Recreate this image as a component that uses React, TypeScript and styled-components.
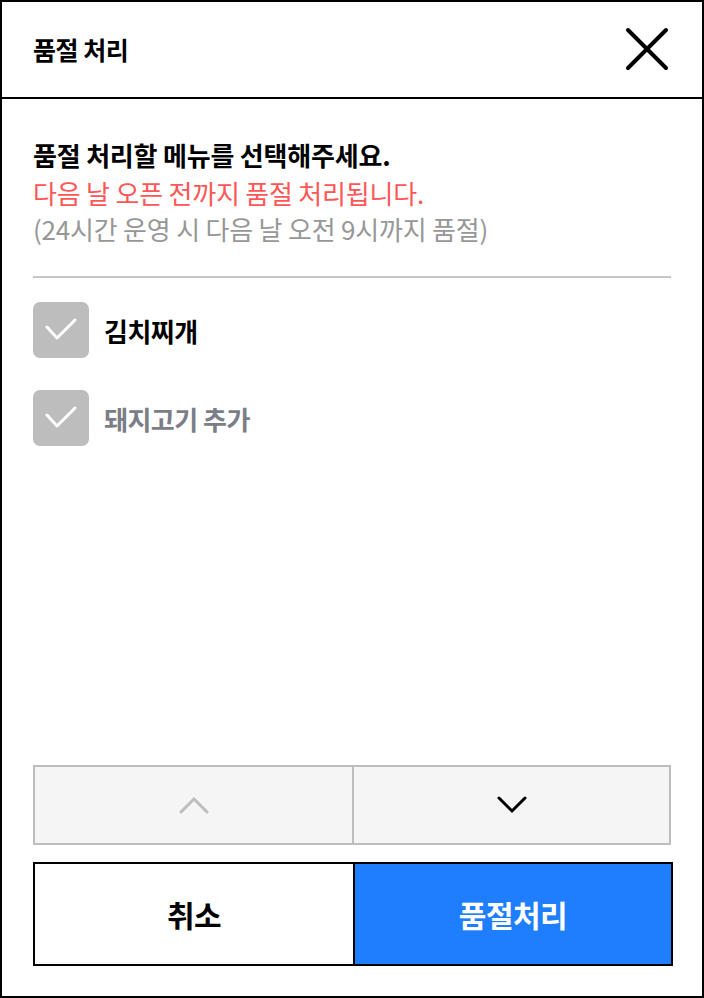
import React, { useState } from "react";
import styled, { createGlobalStyle } from "styled-components";

const GlobalStyle = createGlobalStyle`
  html, body {
    margin: 0;
    padding: 0;
    background: #fff;
  }
  * {
    box-sizing: border-box;
  }
  body {
    font-family: "Noto Sans CJK KR", "Noto Sans", sans-serif;
  }
`;

const Modal = styled.div`
  width: 704px;
  height: 998px;
  border: 2px solid #000;
  display: flex;
  flex-direction: column;
  background: #fff;
`;

const Header = styled.header`
  height: 97px;
  flex-shrink: 0;
  border-bottom: 2px solid #000;
  display: flex;
  align-items: center;
  justify-content: space-between;
  padding: 0 31px 2px 31px;
`;

const Title = styled.h1`
  margin: 0;
  font-size: 25px;
  font-weight: 700;
  letter-spacing: -0.5px;
  color: #000;
`;

const CloseButton = styled.button`
  width: 44px;
  height: 44px;
  margin-right: 2px;
  border: 0;
  padding: 0;
  background: none;
  display: flex;
  align-items: center;
  justify-content: center;
  cursor: pointer;
`;

const Body = styled.main`
  flex: 1;
  display: flex;
  flex-direction: column;
  padding: 37px 31px 30px;
`;

const Notice = styled.div`
  display: flex;
  flex-direction: column;
  padding-bottom: 30px;
  border-bottom: 2px solid #c3c6ce;
`;

const Line = styled.p<{ $tone: "main" | "warn" | "sub" }>`
  margin: 0;
  line-height: ${(p) => (p.$tone === "sub" ? "34px" : "38px")};
  letter-spacing: -0.2px;
  font-size: 26px;
  font-weight: ${(p) => (p.$tone === "main" ? 700 : 400)};
  color: ${(p) =>
    p.$tone === "main" ? "#000" : p.$tone === "warn" ? "#ff5656" : "#979797"};
`;

const MenuList = styled.ul`
  list-style: none;
  margin: 24px 0 0;
  padding: 0;
  display: flex;
  flex-direction: column;
  gap: 32px;
`;

const MenuItem = styled.li`
  display: flex;
  align-items: center;
  gap: 15px;
  cursor: pointer;
`;

const CheckBox = styled.span<{ $checked: boolean }>`
  width: 56px;
  height: 56px;
  border-radius: 7px;
  background: ${(p) => (p.$checked ? "#1e7efe" : "#bdbdbd")};
  display: flex;
  align-items: center;
  justify-content: center;
  flex-shrink: 0;
`;

const MenuLabel = styled.span<{ $option?: boolean }>`
  font-size: 26px;
  font-weight: 700;
  letter-spacing: -0.5px;
  color: ${(p) => (p.$option ? "#7b7e86" : "#000")};
`;

const Spacer = styled.div`
  flex: 1;
`;

const PagerRow = styled.div`
  display: grid;
  grid-template-columns: 1fr 1fr;
  height: 80px;
  border: 2px solid #bdbdbd;
  background: #f5f5f5;
`;

const PagerButton = styled.button<{ $first?: boolean }>`
  border: 0;
  border-left: ${(p) => (p.$first ? "0" : "2px solid #bdbdbd")};
  background: transparent;
  display: flex;
  align-items: center;
  justify-content: center;
  padding: 0;
  cursor: pointer;
`;

const ActionRow = styled.div`
  margin-top: 17px;
  margin-right: -2px;
  display: grid;
  grid-template-columns: 1fr 1fr;
  height: 104px;
  border: 2px solid #000;
`;

const ActionButton = styled.button<{ $primary?: boolean }>`
  border: 0;
  border-left: ${(p) => (p.$primary ? "2px solid #000" : "0")};
  background: ${(p) => (p.$primary ? "#1e7efe" : "#fff")};
  color: ${(p) => (p.$primary ? "#fff" : "#000")};
  font-family: "Noto Sans CJK KR", "Noto Sans", sans-serif;
  font-size: 30px;
  font-weight: 700;
  letter-spacing: -0.5px;
  cursor: pointer;
`;

const CloseIcon = () => (
  <svg width="44" height="44" viewBox="0 0 44 44">
    <path
      d="M3 3 L41 41 M41 3 L3 41"
      stroke="#000"
      strokeWidth="4"
      strokeLinecap="round"
      fill="none"
    />
  </svg>
);

const CheckIcon = () => (
  <svg width="34" height="24" viewBox="0 0 34 24">
    <path
      d="M3 9 L13 20 L31 2"
      stroke="#fff"
      strokeWidth="3"
      strokeLinecap="round"
      strokeLinejoin="round"
      fill="none"
    />
  </svg>
);

const Chevron = ({ up, color }: { up?: boolean; color: string }) => (
  <svg width="30" height="18" viewBox="0 0 30 18">
    <path
      d={up ? "M2 16 L15 3 L28 16" : "M2 2 L15 15 L28 2"}
      stroke={color}
      strokeWidth="3"
      strokeLinecap="round"
      strokeLinejoin="miter"
      fill="none"
    />
  </svg>
);

const menus = [
  { id: 1, name: "김치찌개", option: false },
  { id: 2, name: "돼지고기 추가", option: true },
];

export default function App() {
  const [checked, setChecked] = useState<number[]>([]);

  const toggle = (id: number) =>
    setChecked((prev) =>
      prev.includes(id) ? prev.filter((v) => v !== id) : [...prev, id]
    );

  return (
    <>
      <GlobalStyle />
      <Modal>
        <Header>
          <Title>품절 처리</Title>
          <CloseButton aria-label="닫기">
            <CloseIcon />
          </CloseButton>
        </Header>
        <Body>
          <Notice>
            <Line $tone="main">품절 처리할 메뉴를 선택해주세요.</Line>
            <Line $tone="warn">다음 날 오픈 전까지 품절 처리됩니다.</Line>
            <Line $tone="sub">(24시간 운영 시 다음 날 오전 9시까지 품절)</Line>
          </Notice>
          <MenuList>
            {menus.map((m) => (
              <MenuItem key={m.id} onClick={() => toggle(m.id)}>
                <CheckBox $checked={checked.includes(m.id)}>
                  <CheckIcon />
                </CheckBox>
                <MenuLabel $option={m.option}>{m.name}</MenuLabel>
              </MenuItem>
            ))}
          </MenuList>
          <Spacer />
          <PagerRow>
            <PagerButton $first aria-label="위로">
              <Chevron up color="#bdbdbd" />
            </PagerButton>
            <PagerButton aria-label="아래로">
              <Chevron color="#000" />
            </PagerButton>
          </PagerRow>
          <ActionRow>
            <ActionButton>취소</ActionButton>
            <ActionButton $primary>품절처리</ActionButton>
          </ActionRow>
        </Body>
      </Modal>
    </>
  );
}
